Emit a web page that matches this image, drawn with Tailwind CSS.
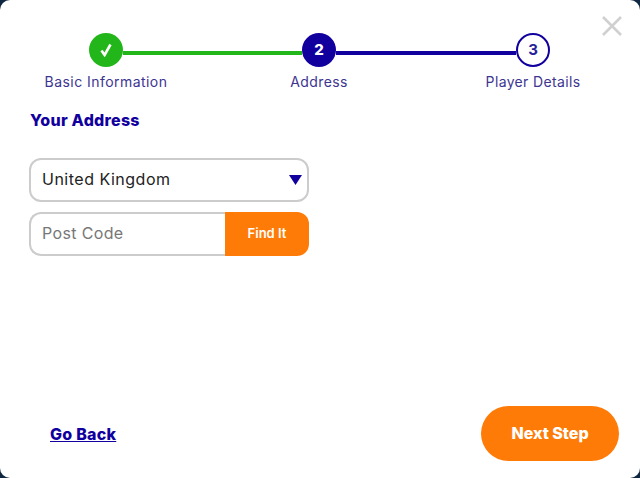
<!DOCTYPE html>
<html>
<head>
<meta charset="utf-8">
<script src="https://cdn.jsdelivr.net/npm/@tailwindcss/browser@4"></script>
</head>
<body class="bg-[#0f2740] font-['Inter','Liberation_Sans',sans-serif]">
<div class="relative w-[640px] h-[478px] overflow-hidden bg-white rounded-[10px] flex flex-col">
  <button class="absolute left-[602px] top-[16px] w-[20px] h-[20px] text-[#d0d0d0]">
    <svg viewBox="0 0 20 20" class="w-[20px] h-[20px]" fill="none" stroke="currentColor" stroke-width="2.6"><path d="M1 1L19 19M19 1L1 19"/></svg>
  </button>

  <div class="pt-[33px] grid grid-cols-[212px_214px_214px]">
    <div class="flex flex-col items-center">
      <div class="flex items-center w-full">
        <div class="flex-1"></div>
        <div class="w-[34px] h-[34px] rounded-full bg-[#22b61a] flex items-center justify-center">
          <svg viewBox="0 0 14 14" class="w-[14px] h-[14px]" fill="none" stroke="white" stroke-width="2.6"><path d="M2.5 7.5L5.6 12L11.5 1.5"/></svg>
        </div>
        <div class="flex-1 h-[4px] mt-[6px] bg-[#22b61a]"></div>
      </div>
      <span class="mt-[6px] text-[14px] leading-[18px] text-[#3d3591] whitespace-nowrap tracking-[0.45px]">Basic Information</span>
    </div>
    <div class="flex flex-col items-center">
      <div class="flex items-center w-full">
        <div class="flex-1 h-[4px] mt-[6px] bg-[#22b61a]"></div>
        <div class="w-[34px] h-[34px] rounded-full bg-[#11009e] text-white text-[15px] font-extrabold flex items-center justify-center">2</div>
        <div class="flex-1 h-[4px] mt-[6px] bg-[#11009e]"></div>
      </div>
      <span class="mt-[6px] text-[14px] leading-[18px] text-[#3d3591] whitespace-nowrap tracking-[0.4px]">Address</span>
    </div>
    <div class="flex flex-col items-center">
      <div class="flex items-center w-full">
        <div class="flex-1 h-[4px] mt-[6px] bg-[#11009e]"></div>
        <div class="w-[34px] h-[34px] rounded-full bg-white border-2 border-[#11009e] text-[#2a1f9a] text-[15px] font-bold flex items-center justify-center">3</div>
        <div class="flex-1"></div>
      </div>
      <span class="mt-[6px] text-[14px] leading-[18px] text-[#3d3591] whitespace-nowrap tracking-[0.35px]">Player Details</span>
    </div>
  </div>

  <div class="pl-[29px] w-[309px] flex-1 flex flex-col">
    <h2 class="mt-[19px] pl-[1px] text-[16px] leading-[20px] font-extrabold text-[#11009e] tracking-[0.25px]">Your Address</h2>
    <div class="mt-[28px] h-[44px] border-2 border-[#cccccc] rounded-[12px] pl-[11px] pr-[5px] flex items-center justify-between">
      <span class="text-[16px] leading-[22px] mb-[2px] text-[#222222] tracking-[0.5px]">United Kingdom</span>
      <svg viewBox="0 0 13 10" class="w-[13px] h-[10px]"><path d="M0 0H13L6.5 10Z" fill="#11009e"/></svg>
    </div>
    <div class="mt-[10px] h-[44px] flex">
      <div class="w-[196px] border-2 border-r-0 border-[#cccccc] rounded-l-[12px] pl-[11px] flex items-center">
        <span class="text-[16px] leading-[22px] mb-[2px] text-[#777777] tracking-[0.35px]">Post Code</span>
      </div>
      <button class="flex-1 bg-[#ff7b07] rounded-r-[12px] text-white text-[13px] font-semibold">Find It</button>
    </div>
  </div>

  <div class="pl-[50px] pr-[21px] pb-[17px] flex items-center justify-between">
    <a class="text-[#11009e] text-[16px] font-extrabold underline tracking-[0.25px]">Go Back</a>
    <button class="w-[138px] h-[55px] pb-[2px] rounded-full bg-[#ff7b07] text-white text-[16px] font-extrabold">Next Step</button>
  </div>
</div>
</body>
</html>
